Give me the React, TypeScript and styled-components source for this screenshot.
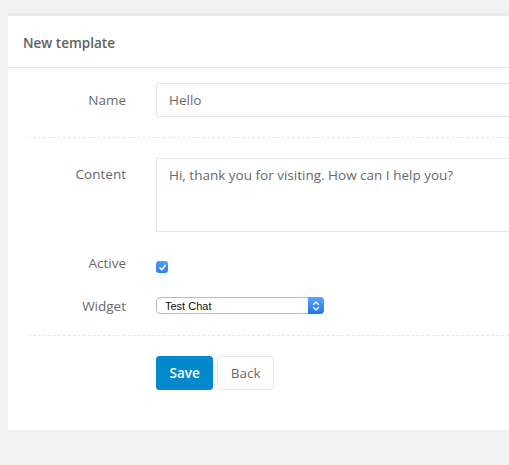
import React from 'react'
import styled, { createGlobalStyle } from 'styled-components'

const GlobalStyle = createGlobalStyle`
  html, body {
    margin: 0;
    padding: 0;
    background: #f1f1f1;
    font-family: "Open Sans", "Liberation Sans", sans-serif;
    color: #676a6c;
    overflow: hidden;
  }
`

const Page = styled.div`
  padding: 13px 0 0 8px;
`

const Card = styled.div`
  background: #fff;
  border-top: 3px solid #e7eaec;
`

const CardTitle = styled.div`
  padding: 3px 15px 0;
  height: 48px;
  display: flex;
  align-items: center;
  border-bottom: 1px solid #e7eaec;
  font-size: 13.5px;
  font-weight: 600;
  color: #5e6163;
`

const CardBody = styled.div`
  padding: 15px 0 40px 20px;
  display: flex;
  flex-direction: column;
`

const Row = styled.div<{ $h: number; $mb: number }>`
  display: grid;
  grid-template-columns: 98px 1fr;
  column-gap: 30px;
  min-height: ${({ $h }) => $h}px;
  margin-bottom: ${({ $mb }) => $mb}px;
`

const Label = styled.label<{ $pt: number }>`
  text-align: right;
  font-size: 13.5px;
  line-height: 20px;
  padding-top: ${({ $pt }) => $pt}px;
  color: #676a6c;
`

const Divider = styled.div`
  border-top: 1px dashed #e7eaec;
  margin-bottom: 20px;
`

const TextInput = styled.input`
  display: block;
  box-sizing: border-box;
  height: 34px;
  width: 100%;
  border: 1px solid #e5e6e7;
  border-right: 0;
  border-radius: 1px 0 0 1px;
  padding: 6px 12px;
  font-family: inherit;
  font-size: 13.5px;
  color: #676a6c;
  outline: none;
`

const TextArea = styled.textarea`
  display: block;
  box-sizing: border-box;
  height: 74px;
  width: 100%;
  border: 1px solid #e5e6e7;
  border-right: 0;
  border-radius: 1px 0 0 1px;
  padding: 6px 12px;
  font-family: inherit;
  font-size: 13.5px;
  line-height: 20px;
  color: #676a6c;
  resize: none;
  outline: none;
`

const CheckBox = styled.span`
  margin-top: 14px;
  width: 12px;
  height: 12px;
  border-radius: 3px;
  background: linear-gradient(#4d9df8, #2a7ff0);
  display: flex;
  align-items: center;
  justify-content: center;
`

const SelectWrap = styled.div`
  position: relative;
  margin-top: 8px;
  width: 168px;
  height: 17px;
`

const Select = styled.select`
  display: block;
  appearance: none;
  box-sizing: border-box;
  width: 100%;
  height: 17px;
  margin: 0;
  border: 1px solid #b9b9b9;
  border-radius: 4px;
  background: #fff;
  padding: 0 0 0 8px;
  font-family: "Liberation Sans", Arial, sans-serif;
  font-size: 11px;
  color: #111;
  outline: none;
`

const Stepper = styled.span`
  position: absolute;
  top: 0;
  right: 0;
  width: 16px;
  height: 17px;
  border-radius: 0 4px 4px 0;
  background: linear-gradient(#5aa6fa, #1f72ef);
  display: flex;
  align-items: center;
  justify-content: center;
  pointer-events: none;
`

const Buttons = styled.div`
  grid-column: 2;
  display: flex;
  gap: 4px;
`

const Button = styled.button<{ $primary?: boolean }>`
  height: 34px;
  padding: 0 12.5px;
  border-radius: 3px;
  font-family: inherit;
  font-size: 13.5px;
  font-weight: ${({ $primary }) => ($primary ? 600 : 400)};
  cursor: pointer;
  border: 1px solid ${({ $primary }) => ($primary ? '#0288cc' : '#e7eaec')};
  background: ${({ $primary }) => ($primary ? '#0288cc' : '#fff')};
  color: ${({ $primary }) => ($primary ? '#fff' : '#676a6c')};
`

export default function App() {
  return (
    <>
      <GlobalStyle />
      <Page>
        <Card>
          <CardTitle>New template</CardTitle>
          <CardBody>
            <Row $h={34} $mb={20}>
              <Label $pt={7}>Name</Label>
              <TextInput defaultValue="Hello" />
            </Row>
            <Divider />
            <Row $h={74} $mb={15}>
              <Label $pt={6}>Content</Label>
              <TextArea defaultValue="Hi, thank you for visiting. How can I help you?" />
            </Row>
            <Row $h={27} $mb={15}>
              <Label $pt={6}>Active</Label>
              <div>
                <CheckBox>
                  <svg width="9" height="9" viewBox="0 0 10 10">
                    <path d="M2 5.3 L4.2 7.5 L8.2 2.5" fill="none" stroke="#fff" strokeWidth="1.6" strokeLinecap="round" strokeLinejoin="round" />
                  </svg>
                </CheckBox>
              </div>
            </Row>
            <Row $h={26} $mb={19}>
              <Label $pt={7}>Widget</Label>
              <div>
                <SelectWrap>
                  <Select defaultValue="test">
                    <option value="test">Test Chat</option>
                  </Select>
                  <Stepper>
                    <svg width="8" height="12" viewBox="0 0 8 12">
                      <path d="M1.5 4.5 L4 2 L6.5 4.5 M1.5 7.5 L4 10 L6.5 7.5" fill="none" stroke="#fff" strokeWidth="1.3" strokeLinecap="round" strokeLinejoin="round" />
                    </svg>
                  </Stepper>
                </SelectWrap>
              </div>
            </Row>
            <Divider />
            <Row $h={34} $mb={0}>
              <Buttons>
                <Button $primary>Save</Button>
                <Button>Back</Button>
              </Buttons>
            </Row>
          </CardBody>
        </Card>
      </Page>
    </>
  )
}
